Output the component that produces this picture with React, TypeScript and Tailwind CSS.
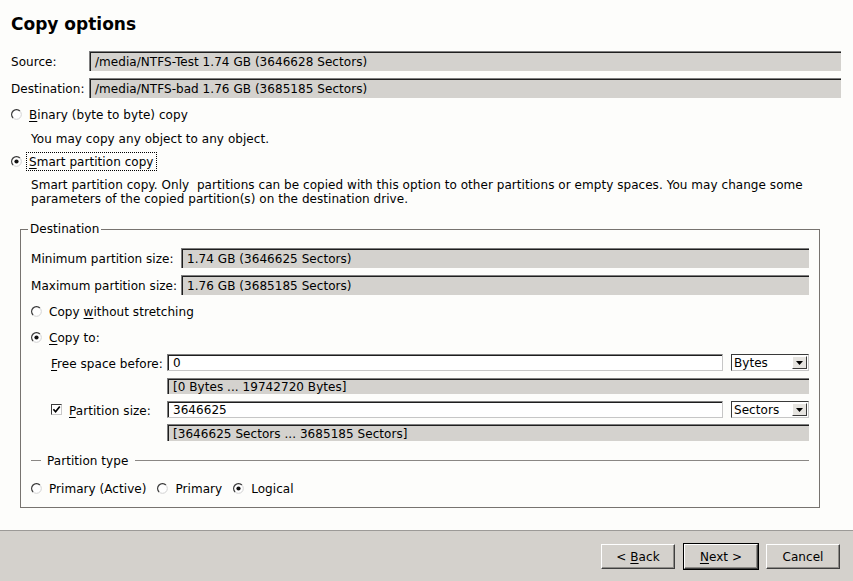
import React from 'react';

const Radio = ({ checked = false }: { checked?: boolean }) => (
  <svg width="11" height="11" viewBox="0 0 11 11" className="shrink-0">
    <circle cx="5.5" cy="5.5" r="4.7" fill="#ffffff" />
    <path d="M8.9 2.1 A4.7 4.7 0 0 0 2.1 8.9" stroke="#3e3e3e" strokeWidth="1.4" fill="none" />
    <path d="M2.1 8.9 A4.7 4.7 0 0 0 8.9 2.1" stroke="#d2d2d2" strokeWidth="1" fill="none" />
    {checked && <circle cx="5.5" cy="5.5" r="2.1" fill="#111111" />}
  </svg>
);

const Checkbox = () => (
  <div className="w-[11px] h-[11px] shrink-0 bg-white border-t border-l border-[#3a3a3a] border-r border-b border-r-[#c8c8c8] border-b-[#c8c8c8] flex items-center justify-center">
    <svg width="9" height="9" viewBox="0 0 9 9">
      <path d="M1.4 4.2 L3.6 6.7 L7.8 1.5" stroke="#000" strokeWidth="1.7" fill="none" />
    </svg>
  </div>
);

const Sunken = ({ children, className = '' }: { children?: React.ReactNode; className?: string }) => (
  <div
    className={`bg-[#d4d2ce] border-t border-l border-[#7e7e7e] shadow-[inset_1px_1px_0_#1e1e1e] flex items-center pl-[5px] pt-[1px] whitespace-nowrap ${className}`}
  >
    {children}
  </div>
);

const Input = ({ value }: { value: string }) => (
  <div className="flex-1 h-[17px] bg-white border border-[#c6c6c6] border-t-[#7e7e7e] border-l-[#7e7e7e] shadow-[inset_1px_1px_0_#1e1e1e] flex items-center pl-[5px] pt-[1px]">
    {value}
  </div>
);

const Select = ({ value }: { value: string }) => (
  <div className="ml-[8px] w-[78px] h-[17px] bg-white border border-[#c6c6c6] border-t-[#3a3a3a] border-l-[#3a3a3a] flex items-center">
    <span className="flex-1 pl-[2px] pt-[1px]">{value}</span>
    <div className="w-[15px] h-[13px] mr-[1px] bg-[#e6e4e0] border border-t-white border-l-white border-r-[#3a3a3a] border-b-[#3a3a3a] flex items-center justify-center">
      <svg width="7" height="4" viewBox="0 0 7 4">
        <path d="M0 0 H7 L3.5 4 Z" fill="#000" />
      </svg>
    </div>
  </div>
);

const Button = ({ children }: { children: React.ReactNode }) => (
  <div className="w-[74px] h-[25px] bg-[#d4d1cc] border border-t-white border-l-white border-r-[#3f3f3f] border-b-[#3f3f3f] shadow-[inset_-1px_-1px_0_#8e8c88] flex items-center justify-center pt-[1px]">
    {children}
  </div>
);

const App: React.FC = () => {
  return (
    <div className="w-[853px] h-[581px] bg-[#fdfdfb] flex flex-col text-[12px] leading-[14px] tracking-[0.05px] text-black font-['DejaVu_Sans',sans-serif]">
      <div className="flex-1 pl-[11px] pr-[12px]">
        {/* Title */}
        <div className="mt-[14px] h-[20px] text-[17px] leading-[20px] tracking-normal font-bold">Copy options</div>

        {/* Source / destination */}
        <div className="mt-[17px] h-[20px] flex items-center">
          <span className="w-[78px] shrink-0 pt-[2px]">Source:</span>
          <Sunken className="flex-1 h-[20px]">/media/NTFS-Test 1.74 GB (3646628 Sectors)</Sunken>
        </div>
        <div className="mt-[7px] h-[20px] flex items-center">
          <span className="w-[78px] shrink-0 pt-[2px]">Destination:</span>
          <Sunken className="flex-1 h-[20px]">/media/NTFS-bad 1.76 GB (3685185 Sectors)</Sunken>
        </div>

        {/* Binary copy */}
        <div className="mt-[7px] h-[18px] flex items-center">
          <Radio />
          <span className="ml-[7px] pt-[2px]">
            <span className="underline underline-offset-2">B</span>inary (byte to byte) copy
          </span>
        </div>
        <div className="mt-[6px] h-[18px] flex items-center pl-[20px] pt-[2px]">You may copy any object to any object.</div>

        {/* Smart copy */}
        <div className="mt-[5px] h-[19px] flex items-center">
          <Radio checked />
          <span className="ml-[4px] h-[19px] px-[2px] pt-[1px] border border-dotted border-black flex items-center">
            <span className="underline underline-offset-2">S</span>mart partition copy
          </span>
        </div>
        <p className="mt-[7px] h-[27px] pl-[20px] whitespace-pre-wrap">
          {'Smart partition copy. Only  partitions can be copied with this option to other partitions or empty spaces. You may change some'}
          <br />
          {'parameters of the copied partition(s) on the destination drive.'}
        </p>

        {/* Destination group */}
        <fieldset className="mt-[17px] ml-[9px] w-[800px] border border-[#77736f] pl-[10px] pr-[10px] pb-[10px]">
          <legend className="ml-[-3px] px-[2px] leading-[14px]">Destination</legend>

          <div className="mt-[12px] h-[20px] flex items-center">
            <span className="w-[150px] shrink-0 pt-[2px]">Minimum partition size:</span>
            <Sunken className="flex-1 h-[20px]">1.74 GB (3646625 Sectors)</Sunken>
          </div>
          <div className="mt-[7px] h-[20px] flex items-center">
            <span className="w-[150px] shrink-0 pt-[2px]">Maximum partition size:</span>
            <Sunken className="flex-1 h-[20px]">1.76 GB (3685185 Sectors)</Sunken>
          </div>

          <div className="mt-[7px] h-[18px] flex items-center">
            <Radio />
            <span className="ml-[7px] pt-[2px]">
              Copy <span className="underline underline-offset-2">w</span>ithout stretching
            </span>
          </div>
          <div className="mt-[8px] h-[18px] flex items-center">
            <Radio checked />
            <span className="ml-[7px] pt-[2px]">
              <span className="underline underline-offset-2">C</span>opy to:
            </span>
          </div>

          <div className="mt-[8px] h-[17px] flex items-center pl-[20px]">
            <span className="w-[116px] shrink-0 pt-[2px]">
              <span className="underline underline-offset-2">F</span>ree space before:
            </span>
            <Input value="0" />
            <Select value="Bytes" />
          </div>
          <div className="mt-[7px] pl-[136px]">
            <Sunken className="h-[16px]">[0 Bytes ... 19742720 Bytes]</Sunken>
          </div>

          <div className="mt-[7px] h-[17px] flex items-center pl-[20px]">
            <div className="w-[116px] shrink-0 flex items-center">
              <Checkbox />
              <span className="ml-[7px] pt-[2px]">
                <span className="underline underline-offset-2">P</span>artition size:
              </span>
            </div>
            <Input value="3646625" />
            <Select value="Sectors" />
          </div>
          <div className="mt-[6px] pl-[136px]">
            <Sunken className="h-[17px]">[3646625 Sectors ... 3685185 Sectors]</Sunken>
          </div>

          {/* Partition type */}
          <div className="mt-[12px] h-[14px] flex items-center">
            <div className="w-[10px] h-px bg-[#8a8784]" />
            <span className="ml-[6px] pt-[2px]">Partition type</span>
            <div className="ml-[7px] flex-1 h-px bg-[#8a8784]" />
          </div>
          <div className="mt-[12px] h-[18px] flex items-center">
            <Radio />
            <span className="ml-[7px] mr-[11px] pt-[2px]">Primary (Active)</span>
            <Radio />
            <span className="ml-[7px] mr-[11px] pt-[2px]">Primary</span>
            <Radio checked />
            <span className="ml-[7px] pt-[2px]">Logical</span>
          </div>
        </fieldset>
      </div>

      {/* Footer */}
      <div className="h-[51px] shrink-0 bg-[#d4d1cc] border-t border-[#9c9a97] flex items-center justify-end pr-[13px]">
        <Button>
          <span>
            &lt; <span className="underline underline-offset-2">B</span>ack
          </span>
        </Button>
        <div className="ml-[8px] border border-black">
          <Button>
            <span>
              <span className="underline underline-offset-2">N</span>ext &gt;
            </span>
          </Button>
        </div>
        <div className="ml-[7px]">
          <Button>Cancel</Button>
        </div>
      </div>
    </div>
  );
};

export default App;
